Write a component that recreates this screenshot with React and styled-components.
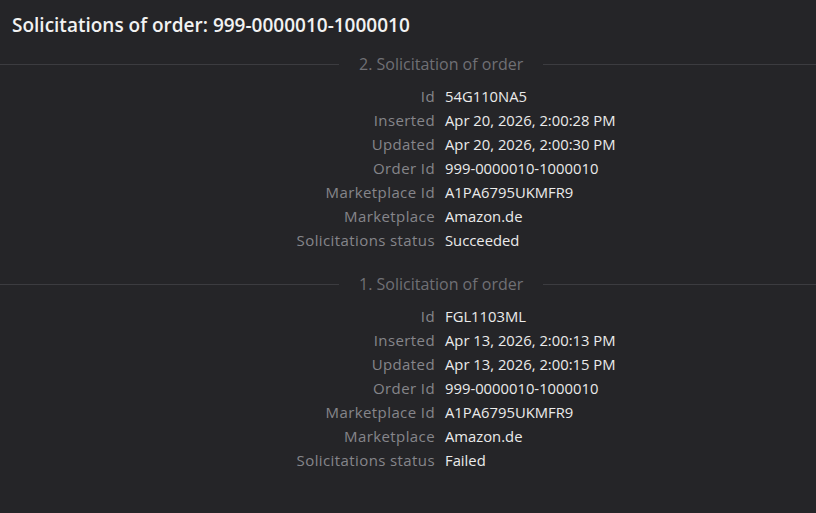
import React from "react";
import styled, { createGlobalStyle } from "styled-components";

const solicitations = [
  {
    title: "2. Solicitation of order",
    fields: [
      ["Id", "54G110NA5"],
      ["Inserted", "Apr 20, 2026, 2:00:28 PM"],
      ["Updated", "Apr 20, 2026, 2:00:30 PM"],
      ["Order Id", "999-0000010-1000010"],
      ["Marketplace Id", "A1PA6795UKMFR9"],
      ["Marketplace", "Amazon.de"],
      ["Solicitations status", "Succeeded"],
    ],
  },
  {
    title: "1. Solicitation of order",
    fields: [
      ["Id", "FGL1103ML"],
      ["Inserted", "Apr 13, 2026, 2:00:13 PM"],
      ["Updated", "Apr 13, 2026, 2:00:15 PM"],
      ["Order Id", "999-0000010-1000010"],
      ["Marketplace Id", "A1PA6795UKMFR9"],
      ["Marketplace", "Amazon.de"],
      ["Solicitations status", "Failed"],
    ],
  },
];

const App = () => {
  return (
    <>
      <GlobalStyle />
      <Page>
        <Title>Solicitations of order: 999-0000010-1000010</Title>
        {solicitations.map((item) => (
          <Section key={item.title}>
            <Divider>
              <LeftLine />
              <Legend>{item.title}</Legend>
              <RightLine />
            </Divider>
            <Fields>
              {item.fields.map(([label, value]) => (
                <React.Fragment key={label}>
                  <Label>{label}</Label>
                  <Value>{value}</Value>
                </React.Fragment>
              ))}
            </Fields>
          </Section>
        ))}
      </Page>
    </>
  );
};

export default App;

const GlobalStyle = createGlobalStyle`
  html, body {
    margin: 0;
    padding: 0;
    background: #252528;
  }
  body {
    font-family: "Open Sans", "Noto Sans", sans-serif;
  }
`;

const Page = styled.main`
  width: 816px;
  height: 513px;
  background: #252528;
  overflow: hidden;
`;

const Title = styled.h1`
  margin: 0;
  padding: 11px 12px 0;
  height: 28px;
  font-size: 19px;
  line-height: 28px;
  font-weight: 600;
  color: #f2f2f2;
`;

const Section = styled.section`
  display: flex;
  flex-direction: column;
  padding-top: 17px;
  padding-bottom: 7px;
`;

const Divider = styled.div`
  display: flex;
  align-items: center;
  height: 16px;
  margin-bottom: 12px;
`;

const LeftLine = styled.div`
  flex: 0 0 339px;
  height: 1px;
  background: #3c3c40;
`;

const RightLine = styled.div`
  flex: 1;
  height: 1px;
  background: #3c3c40;
`;

const Legend = styled.span`
  padding: 0 20px;
  font-size: 16px;
  line-height: 16px;
  color: #707075;
  white-space: nowrap;
`;

const Fields = styled.div`
  display: grid;
  grid-template-columns: 435px 1fr;
  column-gap: 10px;
  grid-auto-rows: 24px;
  align-items: center;
`;

const Label = styled.span`
  text-align: right;
  font-size: 15px;
  letter-spacing: 0.4px;
  color: #86868b;
  white-space: nowrap;
`;

const Value = styled.span`
  font-size: 14.8px;
  color: #ebebeb;
  white-space: nowrap;
`;
